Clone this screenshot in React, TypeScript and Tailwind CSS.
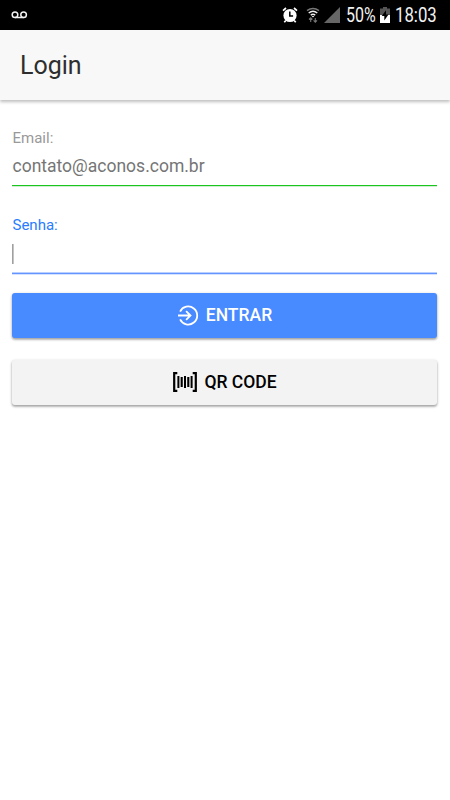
import type { ReactNode } from "react";

const VoicemailIcon = () => (
  <svg className="ml-[11px]" width="17" height="8" viewBox="0 0 17 8" fill="none" stroke="#f2f2f2" strokeWidth="1.5">
    <circle cx="4" cy="3.7" r="2.8" />
    <circle cx="12.6" cy="3.7" r="2.8" />
    <path d="M4 6.5h8.6" />
  </svg>
);

const AlarmIcon = () => (
  <svg width="16" height="16" viewBox="0 0 16 16" fill="none">
    <circle cx="8" cy="8.5" r="6.6" fill="#fff" />
    <path d="M1 3.6 4 1M15 3.6 12 1M3.8 13.5 2.3 15.3M12.2 13.5l1.5 1.8" stroke="#fff" strokeWidth="1.7" />
    <path d="M7.8 4.5v4.4h3.3" stroke="#000" strokeWidth="1.5" />
  </svg>
);

const WifiIcon = () => (
  <svg width="14" height="16" viewBox="0 0 14 16" fill="none">
    <path d="M1 3.6Q7-.8 13 3.6" stroke="#777" strokeWidth="1.5" />
    <path d="M2.7 6Q7 2.5 11.3 6M4.8 8.1Q7 6.4 9.2 8.1" stroke="#eee" strokeWidth="1.5" />
    <path d="M5.7 9 7 10.4 8.3 9z" fill="#fff" />
    <path d="M4.7 15v-4M3 12.5l1.7-1.7 1.7 1.7M9.3 11v4M7.6 13.4l1.7 1.7 1.7-1.7" stroke="#777" strokeWidth="1.1" />
  </svg>
);

const SignalIcon = () => (
  <svg width="16" height="16" viewBox="0 0 16 16">
    <path d="M16 0v16H0z" fill="#666" />
  </svg>
);

const BatteryIcon = () => (
  <svg width="10" height="16" viewBox="0 0 10 16">
    <path d="M3 0h4v1.5h3V8H0V1.5h3z" fill="#555" />
    <path d="M0 8h10v8H0z" fill="#fff" />
    <path d="M6 3.2 1.7 9h2.6v4.5L8.5 7.6H6z" fill="#000" />
  </svg>
);

const EnterIcon = () => (
  <svg width="21" height="21" viewBox="0 0 21 21" fill="none" stroke="currentColor" strokeWidth="1.8">
    <path d="M2.1 6.6A9 9 0 1 1 2.1 14.4" />
    <path d="M0 10.5h12.4M8.1 6.1l4.4 4.4-4.4 4.4" />
  </svg>
);

const BarcodeIcon = () => (
  <svg width="24" height="20" viewBox="0 0 24 20" fill="none" stroke="currentColor">
    <path d="M4.3 1.2H1.2v17.6h3.1M19.7 1.2h3.1v17.6h-3.1" strokeWidth="2.2" />
    <path d="M5.4 4v12M12 4v12M18.6 4v12" strokeWidth="2" />
    <path d="M8.7 5v10M15.3 5v10" strokeWidth="2.1" />
  </svg>
);

const StatusBar = () => (
  <div className="flex h-[30px] items-center bg-black text-[#f2f2f2]">
    <VoicemailIcon />
    <div className="ml-auto flex h-full w-[168px] items-center">
      <AlarmIcon />
      <div className="ml-[8px]">
        <WifiIcon />
      </div>
      <div className="ml-[4px]">
        <SignalIcon />
      </div>
      <span className="ml-[6px] w-[34px] origin-left scale-x-[.82] pt-[2px] whitespace-nowrap text-[19.5px] leading-[30px]">50%</span>
      <BatteryIcon />
      <span className="ml-[5px] w-[50px] origin-left scale-x-[.86] pt-[2px] whitespace-nowrap text-[19.5px] leading-[30px]">18:03</span>
    </div>
  </div>
);

type ButtonProps = {
  className: string;
  icon: ReactNode;
  children: ReactNode;
};

const Button = ({ className, icon, children }: ButtonProps) => (
  <button
    type="button"
    className={`flex h-[45px] w-full items-center justify-center gap-[7px] rounded-[3px] pb-[1px] pl-[1px] text-[17.5px] font-medium shadow-[0_2px_2px_rgba(0,0,0,.16),0_1px_3px_rgba(0,0,0,.3)] ${className}`}
  >
    {icon}
    <span>{children}</span>
  </button>
);

export const Login = () => (
  <div className="min-h-[800px] bg-white font-['Roboto',sans-serif]">
    <StatusBar />
    <header className="flex h-[70px] items-center bg-[#f8f8f8] pt-[2px] pl-[20px] shadow-[0_2px_3px_rgba(0,0,0,.25)]">
      <h1 className="text-[25px] leading-[30px] text-[#2e2e2e]">Login</h1>
    </header>

    <main className="pt-[27px] pr-[13px] pl-[12px]">
      <label className="block h-[59px] border-b border-[#19c51e] shadow-[0_1px_0_#d3edd3]">
        <span className="block pl-[.5px] text-[15px] leading-[22px] text-[#999]">Email:</span>
        <span className="mt-[5px] block pl-[.5px] text-[17.5px] leading-6 text-[#757575]">contato@aconos.com.br</span>
      </label>

      <label className="mt-[29px] block h-[59px] border-b border-[#6494ff] shadow-[0_1px_0_#d5e2ff,inset_0_-1px_0_#b8cfff]">
        <span className="block pl-[.5px] text-[15px] leading-5 text-[#287cff]">Senha:</span>
        <span className="mt-[9px] block h-5 w-[2px] border-r border-[#c4c4c4] bg-[#a0a0a0]" />
      </label>

      <Button className="mt-[19px] bg-[#488aff] text-white" icon={<EnterIcon />}>
        ENTRAR
      </Button>
      <Button className="mt-[22px] bg-[#f3f3f3] text-black" icon={<BarcodeIcon />}>
        QR CODE
      </Button>
    </main>
  </div>
);

export default Login;
